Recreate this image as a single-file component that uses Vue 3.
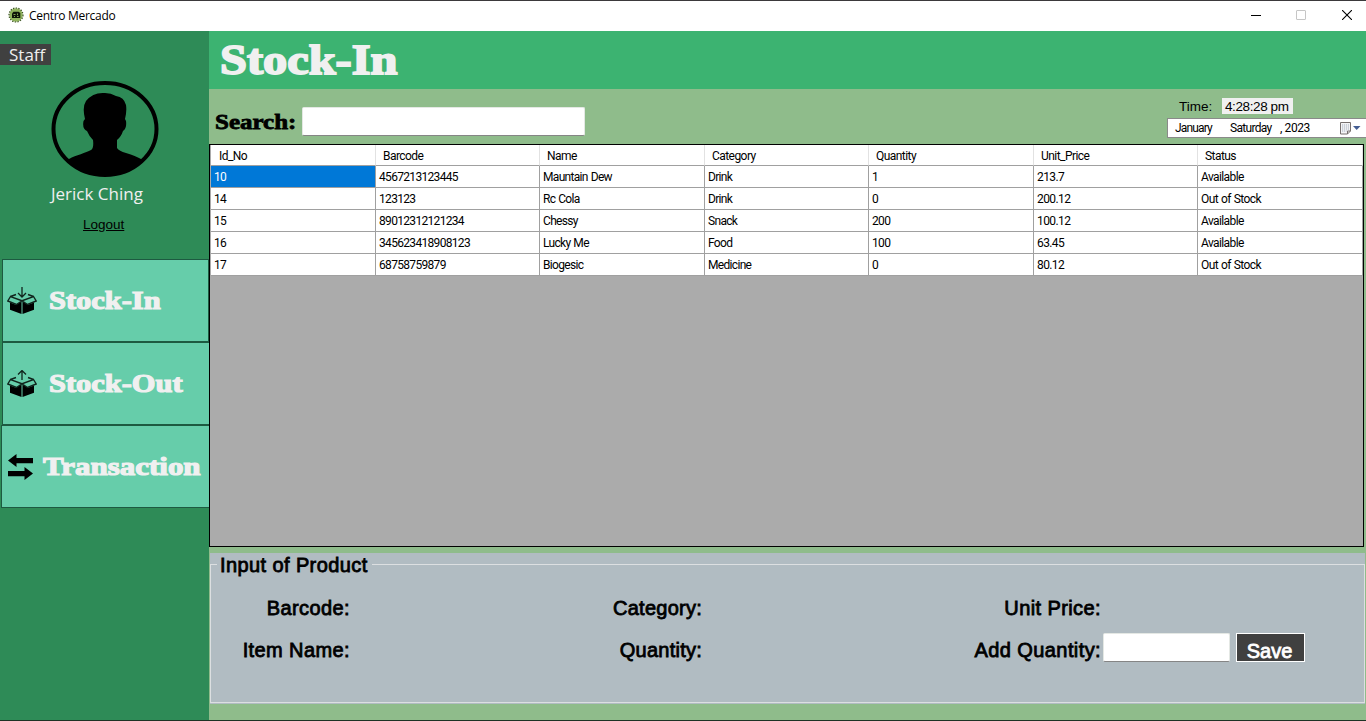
<script setup>
import { ref } from 'vue'

const columns = ['Id_No', 'Barcode', 'Name', 'Category', 'Quantity', 'Unit_Price', 'Status']
const rows = [
  ['10', '4567213123445', 'Mauntain Dew', 'Drink', '1', '213.7', 'Available'],
  ['14', '123123', 'Rc Cola', 'Drink', '0', '200.12', 'Out of Stock'],
  ['15', '89012312121234', 'Chessy', 'Snack', '200', '100.12', 'Available'],
  ['16', '345623418908123', 'Lucky Me', 'Food', '100', '63.45', 'Available'],
  ['17', '68758759879', 'Biogesic', 'Medicine', '0', '80.12', 'Out of Stock'],
]
const search = ref('')
const addQuantity = ref('')
</script>

<template>
  <div class="window">
    <header class="titlebar">
      <svg class="app-icon" width="16" height="16" viewBox="0 0 16 16">
        <circle cx="8" cy="8" r="6.7" fill="#8fb35c" />
        <circle cx="8" cy="8" r="7" fill="none" stroke="#3b5420" stroke-width="1.2" stroke-dasharray="1.4 1.3" />
        <path d="M4 6.500 5.500 4.800h5L12.300 6v5H4z" fill="#0d1408" />
        <path d="M5.500 7.500h2M9.500 6.500v1.600M6 9.500h1M9 9.500h1.600" stroke="#8fb35c" stroke-width=".9" />
      </svg>
      <span class="app-name">Centro Mercado</span>
      <div class="controls">
        <svg width="10" height="10" viewBox="0 0 10 10"><path d="M0 5.500h10" stroke="#000" /></svg>
        <svg width="10" height="10" viewBox="0 0 10 10"><rect x=".5" y=".5" width="9" height="9" rx=".5" fill="none" stroke="#c6c6c6" /></svg>
        <svg width="10" height="10" viewBox="0 0 10 10"><path d="M0 0l10 10M10 0L0 10" stroke="#000" stroke-width="1.1" /></svg>
      </div>
    </header>

    <div class="body">
      <aside class="sidebar">
        <div class="role"><span>Staff</span></div>
        <svg class="avatar" width="108" height="98" viewBox="0 0 108 98">
          <defs>
            <clipPath id="ring"><ellipse cx="54" cy="49" rx="52" ry="47" /></clipPath>
          </defs>
          <path
            clip-path="url(#ring)"
            d="M18 79C25 75 35 73 40 70Q43 68 42 60Q38 56 36 51Q31 49 32.500 41L34 39Q31 27 35 21Q42 12 54 13Q60 13 65 16Q73 17 75 25Q76 31 74 39L75 41Q76 48 72 51Q70 57 66 60V68Q68 71 75 73C82 75 86 77 90 79V98H18z"
          />
          <ellipse cx="54" cy="49" rx="51.500" ry="46" fill="none" stroke="#000" stroke-width="4" />
        </svg>
        <div class="user">Jerick Ching</div>
        <a class="logout">Logout</a>

        <nav class="menu">
          <button class="item item-in">
            <svg width="30" height="28" viewBox="0 0 30 28">
              <path d="M3 15.500l6 2.300 3-1.800 2.500-1.500V27L3 22.800zM27 15.500l-6 2.300-3-1.800-2.500-1.500V27L27 22.800z" />
              <path d="M3.500 9.500L.8 14l8.700 3.500L15 13.800zM26.500 9.500l2.700 4.500-8.700 3.500L15 13.800zM3.500 9.500l5.500-2M26.500 9.500l-5.500-2" fill="none" stroke="#10241c" stroke-width="1.400" />
              <path d="M15 0v9.500M11 6l4 4 4-4" fill="none" stroke="#10241c" stroke-width="1.300" />
            </svg>
            <span class="display">Stock-In</span>
          </button>
          <button class="item item-out">
            <svg width="30" height="28" viewBox="0 0 30 28">
              <path d="M3 15.500l6 2.300 3-1.800 2.500-1.500V27L3 22.800zM27 15.500l-6 2.300-3-1.800-2.500-1.500V27L27 22.800z" />
              <path d="M3.500 9.500L.8 14l8.700 3.500L15 13.800zM26.500 9.500l2.700 4.500-8.700 3.500L15 13.800zM3.500 9.500l5.500-2M26.500 9.500l-5.500-2" fill="none" stroke="#10241c" stroke-width="1.400" />
              <path d="M15 10V1M11 4.500l4-4 4 4" fill="none" stroke="#10241c" stroke-width="1.300" />
            </svg>
            <span class="display">Stock-Out</span>
          </button>
          <button class="item item-trans">
            <svg width="25" height="26" viewBox="0 0 25 26">
              <path d="M0 6.500L8.500 0v4H25v5.300H8.500V13zM25 19.500L16.500 13v4H0v5.300h16.500V26z" />
            </svg>
            <span class="display">Transaction</span>
          </button>
        </nav>
      </aside>

      <main class="content">
        <div class="banner"><h1 class="display">Stock-In</h1></div>

        <div class="toolbar">
          <label class="search-label display">Search:</label>
          <input v-model="search" class="textbox search-box" />
          <div class="clock">
            <div class="time-row">
              <span class="time-label">Time:</span>
              <span class="time">4:28:28 pm</span>
            </div>
            <div class="date">
              <span class="month">January</span>
              <span class="day">Saturday</span>
              <span class="year">, 2023</span>
              <svg width="21" height="13" viewBox="0 0 21 13">
                <path d="M.5.5h10v8.500l-3 3h-7z" fill="#f4f4f6" stroke="#77706f" />
                <path d="M10.500 9h-3v3" fill="none" stroke="#77706f" />
                <path d="M2 3h7M2 5h7M2 7h7M2 9h4.500" stroke="#a3adbd" stroke-dasharray="1.200 .8" />
                <path d="M13 4h7.500L16.700 8z" fill="#455e93" />
              </svg>
            </div>
          </div>
        </div>

        <div class="grid">
          <div class="row head">
            <div v-for="c in columns" :key="c" class="cell">{{ c }}</div>
          </div>
          <div v-for="(r, i) in rows" :key="r[0]" class="row">
            <div v-for="(v, j) in r" :key="j" class="cell" :class="{ selected: i === 0 && j === 0 }">{{ v }}</div>
          </div>
        </div>

        <section class="panel">
          <div class="group">
            <div class="legend"><span>Input of Product</span></div>
            <div class="fields">
              <span>Barcode:</span>
              <span>Category:</span>
              <span>Unit Price:</span>
              <span>Item Name:</span>
              <span>Quantity:</span>
              <span>Add Quantity:</span>
              <div class="entry">
                <input v-model="addQuantity" class="textbox qty-box" />
                <button class="save">Save</button>
              </div>
            </div>
          </div>
        </section>
      </main>
    </div>
  </div>
</template>

<style>
body {
  background: #fff;
  overflow: hidden;
}
</style>

<style scoped>
* {
  box-sizing: border-box;
}
.window {
  width: 1366px;
  height: 721px;
  display: flex;
  flex-direction: column;
  border-top: 1px solid #3b393b;
  border-bottom: 1px solid #1d3325;
  font-family: 'Liberation Sans', sans-serif;
  color: #000;
  white-space: nowrap;
}
.titlebar {
  height: 30px;
  flex: none;
  display: flex;
  align-items: center;
  padding: 0 14px 0 8px;
  background: #fff;
}
.app-icon {
  margin-top: -2px;
}
.app-name {
  margin: -2px 0 0 5px;
  font: 12px 'Open Sans', sans-serif;
  letter-spacing: -0.3px;
}
.controls {
  margin: -2px 0 0 auto;
  display: flex;
  gap: 36px;
}
.controls svg {
  display: block;
}
.controls svg:first-child {
  margin-right: -1px;
}
.body {
  flex: 1;
  min-height: 0;
  display: flex;
}
.display {
  font-family: 'Liberation Serif', serif;
  font-weight: bold;
  display: inline-block;
  transform-origin: 0 50%;
}

/* sidebar */
.sidebar {
  width: 209px;
  flex: none;
  background: #2e8b57;
  display: flex;
  flex-direction: column;
  align-items: flex-start;
}
.role {
  margin-top: 13px;
  width: 51px;
  height: 21px;
  padding-left: 9px;
  background: #404040;
  color: #f0f0f0;
  font: 17px/21px 'Open Sans', sans-serif;
}
.avatar {
  display: block;
  margin: 15px 0 0 51px;
}
.user {
  margin: 5px 0 0 51px;
  height: 22px;
  color: #f0f0f0;
  font: 17px/22px 'Open Sans', sans-serif;
}
.logout {
  margin: 12px 0 0 83px;
  height: 16px;
  font-size: 13.5px;
  line-height: 16px;
  text-decoration: underline;
}
.menu {
  margin-top: 26px;
  width: 209px;
  display: flex;
  flex-direction: column;
}
.item {
  height: 83px;
  margin: 0 0 0 2px;
  padding: 1px 0 0 4px;
  display: flex;
  align-items: center;
  border: 1px solid #1d5a41;
  border-radius: 0;
  background: #66cdaa;
  color: #f0f0f0;
  font-size: 26px;
}
.item .display {
  -webkit-text-stroke: 1.2px #f0f0f0;
  transform: scaleX(1.17);
}
.item-out,
.item-trans {
  border-right: 0;
}
.item-trans {
  margin-left: 1px;
}
.item-in .display,
.item-out .display {
  margin-left: 12px;
}
.item-trans svg {
  margin-left: 2px;
}
.item-trans .display {
  margin-left: 10px;
  transform: scaleX(1.19);
}

/* content */
.content {
  flex: 1;
  min-width: 0;
  display: flex;
  flex-direction: column;
  background: #8fbc8b;
}
.banner {
  height: 58px;
  flex: none;
  padding-left: 11px;
  background: #3cb371;
}
.banner h1 {
  margin: 0;
  color: #f0f0f0;
  font-size: 42px;
  line-height: 59px;
  -webkit-text-stroke: 1.8px #f0f0f0;
  transform: scaleX(1.152);
}
.toolbar {
  height: 55px;
  flex: none;
  display: flex;
  align-items: flex-start;
  padding-left: 6px;
}
.search-label {
  width: 87px;
  margin-top: 20px;
  font-size: 22px;
  line-height: 26px;
  -webkit-text-stroke: 0.8px #000;
  transform: scaleX(1.135);
}
.textbox {
  padding: 0 4px;
  border: 1px solid #e4e8e4;
  border-bottom-color: #858585;
  border-radius: 2px;
  outline: 0;
  background: #fff;
}
.search-box {
  width: 283px;
  height: 29px;
  margin-top: 18px;
}
.clock {
  width: 199px;
  margin: 9px 0 0 auto;
}
.time-row {
  display: flex;
  padding-left: 12px;
  height: 16px;
  font-size: 13.5px;
  line-height: 17px;
}
.time-label {
  width: 43px;
}
.time {
  width: 71px;
  padding-left: 3px;
  background: #f0f0f0;
  letter-spacing: -0.4px;
}
.date {
  display: flex;
  align-items: center;
  width: 199px;
  height: 20px;
  margin-top: 4px;
  padding-left: 7px;
  background: #fff;
  border: 1px solid #8a8a8a;
  border-right: 0;
  font: 12px Roboto, sans-serif;
  letter-spacing: -0.7px;
}
.month {
  width: 55px;
  letter-spacing: -0.85px;
}
.day {
  width: 50px;
}
.year {
  width: 60px;
  letter-spacing: -0.4px;
}

/* data grid */
.grid {
  width: 1155px;
  height: 403px;
  flex: none;
  padding: 0 1px;
  background: #ababab;
  border: 1px solid #000;
  font: 12px Roboto, sans-serif;
  letter-spacing: -0.68px;
}
.row {
  display: grid;
  grid-template-columns: 165px 164px 165px 164px 165px 164px 165px;
  grid-template-rows: 22px;
}
.row.head {
  grid-template-rows: 21px;
}
.cell {
  padding: 1px 0 0 3px;
  line-height: 20px;
  word-spacing: 0.6px;
  background: #fff;
  border-right: 1px solid #a0a0a0;
  border-bottom: 1px solid #a0a0a0;
}
.cell:nth-child(n + 6) {
  letter-spacing: -0.6px;
}
.head .cell {
  padding: 0 0 0 7px;
  line-height: 22px;
  height: 21px;
  letter-spacing: -0.55px;
  border-right-color: #e2e2e2;
}
.head .cell:first-child {
  padding-left: 8px;
}
.cell.selected {
  background: #0078d7;
  color: #fff;
}

/* product panel */
.panel {
  width: 1155px;
  height: 151px;
  flex: none;
  margin: 6px 0 0 1px;
  padding-top: 11px;
  background: #b1bcc2;
  font-size: 20px;
}
.group {
  height: 139px;
  border: 1px solid #dcdfe1;
}
.legend {
  height: 24px;
  margin-top: -12px;
  padding-left: 6px;
  line-height: 25px;
}
.legend span {
  display: inline-block;
  width: 155px;
  height: 24px;
  padding-left: 3px;
  background: #b1bcc2;
}
.legend span,
.fields > span {
  letter-spacing: 0.4px;
  -webkit-text-stroke: 0.8px #000;
}
.fields > span:nth-child(2),
.fields > span:nth-child(5) {
  letter-spacing: 0.25px;
}
.fields {
  display: grid;
  grid-template-columns: 139px 352px 399px 1fr;
  grid-template-rows: 42px 42px;
  margin-top: 10px;
  line-height: 43px;
  text-align: right;
}
.fields > span:nth-child(4) {
  grid-column: 1;
}
.entry {
  display: flex;
  align-items: center;
  gap: 6px;
  padding: 0 0 6px 2px;
}
.qty-box {
  width: 127px;
  height: 29px;
}
.save {
  width: 69px;
  height: 29px;
  padding: 4px 2px 0 0;
  border: 1px solid #fff;
  background: #404040;
  color: #fff;
  font: 20px/26px 'Liberation Sans', sans-serif;
  -webkit-text-stroke: 0.8px #fff;
}
</style>
